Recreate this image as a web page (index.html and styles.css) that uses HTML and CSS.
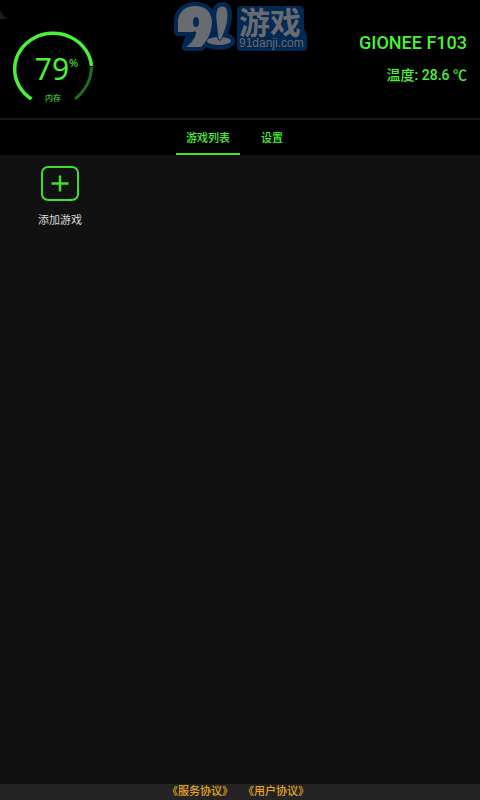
FILE: index.html
```html
<!DOCTYPE html>
<html lang="zh-CN">
	<head>
		<meta charset="utf-8">
		<meta name="viewport" content="width=device-width, initial-scale=1.0">
		<title>游戏列表</title>
		<link rel="stylesheet" href="styles.css">
	</head>
	<body>
		<header class="header">
			<svg class="corner" width="10" height="20" viewBox="0 0 10 20" aria-hidden="true">
				<path d="M0 10Q3 16 8 19H0z" fill="#1b1b1b"/>
			</svg>
			<div class="gauge">
				<svg width="84" height="76" viewBox="0 0 84 76" aria-hidden="true">
					<path d="M80.500 37Q80 56 64 69" fill="none" stroke="#1f701b" stroke-width="3"/>
					<path d="M20.500 69A38.500 36 0 1 1 80.500 36" fill="none" stroke="#49f137" stroke-width="3.500"/>
				</svg>
				<div class="gauge-text">
					<div class="gauge-value">79<span class="gauge-unit">%</span></div>
					<div class="gauge-label">内存</div>
				</div>
			</div>
			<div class="logo">
				<svg width="140" height="56" viewBox="0 0 140 56" aria-hidden="true">
					<g class="logo-edge">
						<path d="M26 6C15 6 9 13 9 21V32H22L17 47H32C38 40 43 30 43 20C42 11 36 6 26 6z"/>
						<path d="M53 6C48 6 46 12 47 20L49 38H53C56 31 59 23 59 15C59 9 57 6 53 6z"/>
						<ellipse cx="50" cy="41" rx="12" ry="5"/>
						<path d="M72 10H131V29L134 37V47H72z"/>
					</g>
					<path class="logo-face" fill-rule="evenodd" d="M26 6C15 6 9 13 9 22V32H22C26 32 28 30 27 34C25 40 21 44 17 47H32C39 41 43 31 43 21C42 11 36 6 26 6zM27 17C29 17 30 19 30 22C30 25 29 27 27 27C25 27 24 25 24 22C24 19 25 17 27 17z"/>
					<ellipse class="logo-face" cx="50" cy="41" rx="12" ry="4"/>
					<path class="logo-face logo-pin" d="M53 6C48 6 46 12 47 20L49 39Q51 42 53 38C56 31 59 23 59 15C59 9 57 6 53 6z"/>
				</svg>
				<div class="logo-text">
					<div class="logo-name">游戏</div>
					<div class="logo-site">91danji.com</div>
				</div>
			</div>
			<div class="device">
				<div class="device-name">GIONEE F103</div>
				<div class="device-temp">温度: 28.6 ℃</div>
			</div>
		</header>
		<nav class="tabs">
			<button class="tab active" type="button">游戏列表</button>
			<button class="tab" type="button">设置</button>
		</nav>
		<main class="games">
			<button class="add-game" type="button">
				<svg width="38" height="36" viewBox="0 0 38 36" fill="none" stroke="#3edf2f" stroke-width="2" aria-hidden="true">
					<rect x="1" y="1" width="36" height="33" rx="6"/>
					<path d="M10.500 17.500h17M19 9.500v16" stroke-width="2.500"/>
				</svg>
				<span>添加游戏</span>
			</button>
		</main>
		<footer class="footer">
			<a href="#service">《服务协议》</a>
			<a href="#user">《用户协议》</a>
		</footer>
	</body>
</html>
```

FILE: styles.css
```css
* {
	box-sizing: border-box;
}

body {
	display: flex;
	flex-direction: column;
	min-height: 100vh;
	margin: 0;
	background: #111;
	color: #49f137;
	font-family: Roboto, "Noto Sans CJK SC", sans-serif;
}

button {
	padding: 0;
	border: 0;
	background: none;
	color: inherit;
	font: inherit;
	cursor: pointer;
}

svg {
	display: block;
}

.header {
	position: relative;
	display: grid;
	grid-template-columns: 1fr auto 1fr;
	align-items: start;
	height: 118px;
	padding: 0 13px 0 11px;
	background: #000;
}

.corner {
	position: absolute;
	top: 0;
	left: 0;
}

.gauge {
	position: relative;
	width: 84px;
	margin-top: 30px;
}

.gauge-text {
	position: absolute;
	inset: 0;
	text-align: center;
}

.gauge-value {
	display: flex;
	justify-content: center;
	padding: 23px 0 0 7px;
	font-family: "Noto Sans", sans-serif;
	font-size: 30px;
	line-height: 32px;
}

.gauge-unit {
	font-size: 11px;
	line-height: 20px;
}

.gauge-label {
	margin-top: 8px;
	font-size: 8px;
	line-height: 12px;
}

.logo {
	position: relative;
	color: #686b70;
}

.logo-edge {
	fill: #032852;
	stroke: #032852;
	stroke-width: 8;
	stroke-linejoin: round;
}

.logo-face {
	fill: #686b70;
}

.logo-pin {
	stroke: #032852;
	stroke-width: 1;
}

/* wordmark lies over the blue plate */
.logo-text {
	position: absolute;
	top: 6px;
	left: 70px;
}

.logo-name {
	font-family: "Noto Sans CJK SC", sans-serif;
	font-size: 31px;
	font-weight: 700;
	line-height: 30px;
}

.logo-site {
	font-family: "Liberation Sans", sans-serif;
	font-size: 12px;
	line-height: 14px;
}

.device {
	padding-top: 32px;
	text-align: right;
	white-space: nowrap;
}

.device-name {
	font-size: 18px;
	font-weight: 500;
	line-height: 22px;
}

.device-temp {
	margin-top: 10px;
	font-size: 14px;
	font-weight: 500;
	line-height: 22px;
}

.tabs {
	display: flex;
	justify-content: center;
	height: 37px;
	border-top: 2px solid #191919;
	background: #000;
}

.tab {
	width: 64px;
	border-bottom: 2px solid transparent;
	font-size: 11px;
	font-weight: 500;
}

.tab.active {
	border-color: #3edf2f;
}

.games {
	flex: 1;
	padding: 11px 20px;
}

.add-game {
	display: flex;
	flex-direction: column;
	align-items: center;
	gap: 11px;
	width: 80px;
	color: #ddd;
	font-size: 11px;
	line-height: 16px;
}

.footer {
	display: flex;
	justify-content: center;
	gap: 10px;
	padding-right: 4px;
	background: #242424;
	font-size: 11px;
	line-height: 16px;
}

.footer a {
	color: #e5a81b;
	font-weight: 500;
	text-decoration: none;
}
```
